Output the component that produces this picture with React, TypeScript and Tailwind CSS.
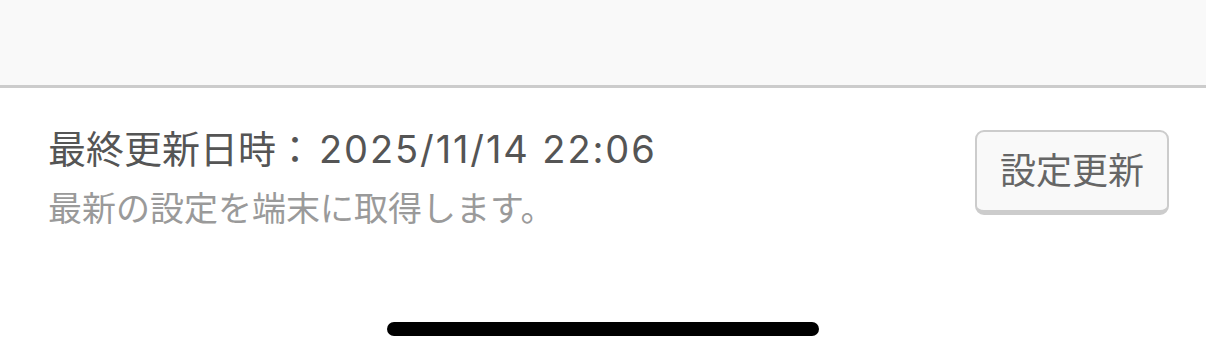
export default function App() {
  return (
    <div
      className="w-[1206px] h-[361px] bg-white flex flex-col overflow-hidden"
      style={{ fontFamily: 'Inter, "Noto Sans CJK JP", sans-serif' }}
    >
      {/* top bar */}
      <div className="h-[88px] shrink-0 bg-[#f9f9f9] border-b-[3px] border-[#cccccc]" />

      {/* settings row */}
      <div className="flex items-start justify-between pl-[48px] pr-[37px] pt-[37px]">
        <div className="flex flex-col">
          <div className="text-[38px] leading-[48px] text-[#555555]">
            最終更新日時：<span className="ml-[5px] tracking-[1.9px]">2025/11/14 22:06</span>
          </div>
          <div className="mt-[16px] text-[34px] leading-[40px] text-[#9a9a9a]">
            最新の設定を端末に取得します。
          </div>
        </div>
        <button className="mt-[5px] w-[194px] h-[85px] rounded-[9px] border-2 border-b-[5px] border-[#cccccc] bg-[#f9f9f9] text-[36px] text-[#666666] flex items-center justify-center">
          設定更新
        </button>
      </div>

      {/* home indicator */}
      <div className="flex-1 flex items-end justify-center pb-[25px]">
        <div className="w-[432px] h-[14px] rounded-full bg-black" />
      </div>
    </div>
  );
}
